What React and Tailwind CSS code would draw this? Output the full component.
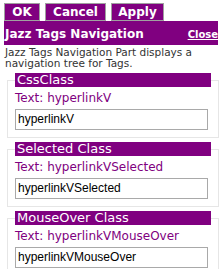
import React from "react";

const sections = [
  { title: "CssClass", value: "hyperlinkV" },
  { title: "Selected Class", value: "hyperlinkVSelected" },
  { title: "MouseOver Class", value: "hyperlinkVMouseOver" },
];

export default function App() {
  return (
    <div className="w-[223px] h-[269px] bg-white overflow-hidden font-['DejaVu_Sans',Verdana,sans-serif]">
      <div className="ml-[4px] w-[214px]">
        {/* Buttons */}
        <div className="flex gap-[5px] pt-[3px]">
          {[
            ["OK", "w-[36px]"],
            ["Cancel", "w-[61px]"],
            ["Apply", "w-[53px]"],
          ].map(([label, w]) => (
            <button
              key={label}
              className={`${w} h-[18px] bg-[#800080] border border-[#a0a0a0] text-white font-bold text-[12px] leading-[16px] flex items-center justify-center`}
            >
              {label}
            </button>
          ))}
        </div>

        {/* Title bar */}
        <div className="h-[24px] bg-[#800080] flex items-end justify-between pb-[4px] pl-[1px] pr-0">
          <span className="text-white font-bold text-[12px] leading-[14px]">Jazz Tags Navigation</span>
          <a className="text-white font-bold text-[10px] leading-[12px] underline">Close</a>
        </div>

        {/* Description */}
        <p className="pt-[2px] pl-[1px] text-[10.5px] leading-[11px] text-[#333333]">
          Jazz Tags Navigation Part displays a navigation tree for Tags.
        </p>

        {/* Sections */}
        <div className="flex flex-col gap-[4px] mt-[4px]">
          {sections.map((s) => (
            <fieldset key={s.title} className="mx-[3px] border border-[#e6e6e6] px-[7px] pb-[7px]">
              <legend className="w-[196px] h-[14px] bg-[#800080] text-white text-[13px] leading-[14px] pl-[2px]">
                {s.title}
              </legend>
              <div className="pt-[3px] text-[12px] leading-[16px] text-[#800080]">Text: {s.value}</div>
              <input
                readOnly
                value={s.value}
                className="mt-[1px] w-[193px] h-[21px] border border-[#a9a9a9] pl-[2px] text-[12px] text-black font-['Liberation_Sans',Arial,sans-serif] outline-none"
              />
            </fieldset>
          ))}
        </div>
      </div>
    </div>
  );
}
